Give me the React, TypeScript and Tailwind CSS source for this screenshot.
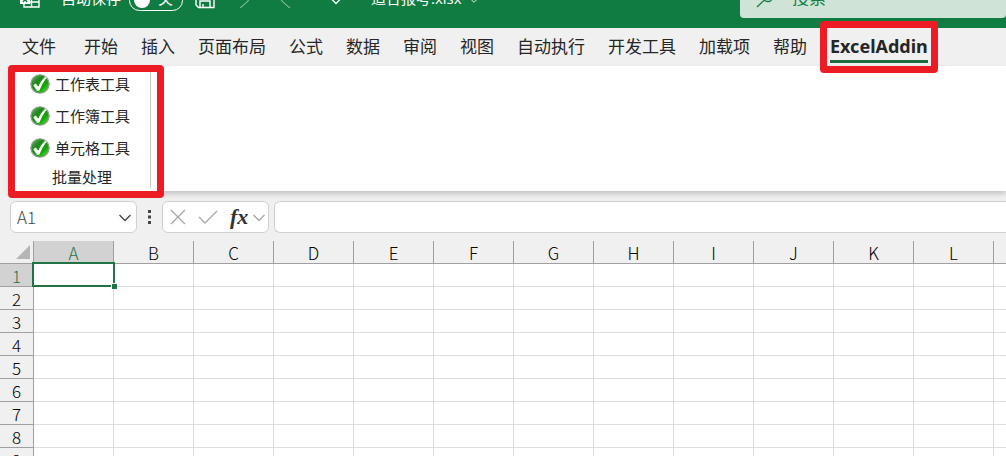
import { useState } from 'react';

const TABS = ['开始', '插入', '页面布局', '公式', '数据', '审阅', '视图', '自动执行', '开发工具', '加载项', '帮助'];
const TOOLS = ['工作表工具', '工作簿工具', '单元格工具'];
const COLUMNS = ['A', 'B', 'C', 'D', 'E', 'F', 'G', 'H', 'I', 'J', 'K', 'L', 'M'];
const ROWS = [1, 2, 3, 4, 5, 6, 7, 8, 9];

function CheckBall() {
  return (
    <svg width="20" height="20" viewBox="0 0 20 20" aria-hidden="true">
      <defs>
        <linearGradient id="ball" x1="0" y1="0" x2="1" y2="1">
          <stop offset="0" stopColor="#7fae7c" />
          <stop offset="0.35" stopColor="#1d8a1c" />
          <stop offset="0.65" stopColor="#12a408" />
          <stop offset="1" stopColor="#62e83c" />
        </linearGradient>
      </defs>
      <circle cx="10" cy="10" r="9.2" fill="url(#ball)" stroke="#93a093" strokeWidth="1.1" />
      <path d="M3.200 11.200l2.600-1.700 2.500 3.300C9.900 9 12.200 5.400 15.200 2.800l1.600.9C13.700 7.300 11.300 11.500 9.500 16.600l-2.300.4z" fill="#fff" />
    </svg>
  );
}

function Chevron({ className, size = 12 }: { className?: string; size?: number }) {
  return (
    <svg className={className} width={size} height={size} viewBox="0 0 12 12" fill="none" stroke="currentColor" strokeWidth="1.3" aria-hidden="true">
      <path d="M0.500 4L6 9.500 11.500 4" />
    </svg>
  );
}

function TitleBar() {
  return (
    <header className="flex h-7 items-end overflow-hidden bg-[#107c41] text-white">
      <div className="flex h-14 w-full shrink-0 items-center">
        <svg className="ml-5 shrink-0" width="20" height="18" viewBox="0 0 20 18" fill="none" stroke="currentColor" strokeWidth="1.4" aria-hidden="true">
          <path d="M4 1h15v15H4zM4 6h15M4 11h15M11.500 1v15" />
          <path d="M0 4h10v9H0z" fill="#fff" stroke="none" />
          <path d="M3 6l4 5M7 6l-4 5" stroke="#107c41" />
        </svg>
        <span className="ml-[21px] pb-1 text-[15px]">自动保存</span>
        <button type="button" role="switch" aria-checked="false" aria-label="自动保存" className="ml-2 flex h-[21px] w-[54px] shrink-0 items-center gap-2 rounded-full border border-white px-1">
          <span className="size-4 rounded-full bg-white" />
          <span className="pb-1 text-[15px]">关</span>
        </button>
        <button type="button" aria-label="保存" className="ml-3">
          <svg width="20" height="18" viewBox="0 0 20 18" fill="none" stroke="currentColor" strokeWidth="1.400">
            <path d="M1 1h15l3 3v12.500H3.500L1 14zM5 16.500V10h10v6.500M8 16v-3M5 1v5h9V1" />
          </svg>
        </button>
        <button type="button" aria-label="撤消" className="ml-5 text-[#7fb998]">
          <svg width="16" height="16" viewBox="0 0 16 16" fill="none" stroke="currentColor" strokeWidth="1.200">
            <path d="M2 1v6h6M2 7C6 1 14 2 14 7c0 2-2 3-9 9" />
          </svg>
        </button>
        <button type="button" aria-label="恢复" className="ml-7 text-[#7fb998]">
          <svg width="16" height="16" viewBox="0 0 16 16" fill="none" stroke="currentColor" strokeWidth="1.200">
            <path d="M14 1v6H8M14 7C10 1 2 2 2 7c0 2 2 3 9 9" />
          </svg>
        </button>
        <Chevron className="ml-[35px] shrink-0" />
        <span className="ml-[29px] pb-1 text-[15px] whitespace-nowrap">适合报考.xlsx</span>
        <Chevron className="ml-2 shrink-0" size={8} />
        <label className="ml-auto flex h-9 w-[266px] items-center gap-4 rounded bg-[#cfe4d7] pl-4 text-[#107c41]">
          <svg className="shrink-0" width="20" height="16" viewBox="0 0 20 16" fill="none" stroke="currentColor" strokeWidth="1.300" aria-hidden="true">
            <circle cx="12" cy="5" r="4.500" />
            <path d="M8.500 8L1 15" />
          </svg>
          <input type="search" placeholder="搜索" aria-label="搜索" className="w-full min-w-0 bg-transparent pb-1 text-[17px] outline-none placeholder:text-[#107c41]" />
        </label>
      </div>
    </header>
  );
}

function RibbonTabs() {
  return (
    <nav className="flex h-[38px] items-center gap-[23px] bg-[#f0f0f0] pl-[22px] text-[17px] whitespace-nowrap text-[#262626]">
      <button type="button" className="mr-[5px]">文件</button>
      {TABS.map(tab => (
        <button type="button" key={tab}>{tab}</button>
      ))}
      <div className="relative">
        <button type="button" aria-current="page" className="block h-8 border-b-3 border-[#1d6b40] font-['Noto_Sans'] text-lg leading-7 font-bold">ExcelAddin</button>
        <div className="pointer-events-none absolute -inset-2.5 z-20 rounded-sm border-[7px] border-[#ed1c24]" />
      </div>
    </nav>
  );
}

function Ribbon() {
  return (
    <section className="bg-[#f0f0f0] pl-2.5">
      <div className="relative z-10 flex h-[125px] bg-white pl-0.5 shadow-[0_3px_5px_#00000030]">
        <div className="relative mt-0.5 flex h-[120px] w-[139px] flex-col border-r border-[#c8c8c8] text-[15px] text-[#262626]">
          {TOOLS.map(tool => (
            <button type="button" key={tool} className="flex h-8 shrink-0 items-center gap-[5px] pl-[18px]">
              <CheckBall />
              {tool}
            </button>
          ))}
          <div className="pl-10 leading-[26px]">批量处理</div>
          <div className="pointer-events-none absolute -top-[3px] -right-3.5 -bottom-2.5 -left-1 z-10 rounded-sm border-[7px] border-[#ed1c24]" />
        </div>
      </div>
    </section>
  );
}

function FormulaBar() {
  const [formula, setFormula] = useState('');

  return (
    <div className="flex h-[50px] items-center bg-[#f0f0f0] pt-0.5 pl-2.5 text-[#444]">
      <div className="flex h-8 w-[127px] items-center rounded-md border border-[#d0d0d0] bg-white pr-[5px]">
        <input defaultValue="A1" aria-label="名称框" className="w-full min-w-0 bg-transparent pl-1.5 font-['Noto_Sans_CJK_SC'] text-[17px] font-light outline-none" />
        <Chevron className="shrink-0" />
      </div>
      <svg className="mx-[11px]" width="3" height="14" viewBox="0 0 3 14" fill="#444" aria-hidden="true">
        <path d="M0 0h3v3H0zM0 5.500h3v3H0zM0 11h3v3H0z" />
      </svg>
      <div className="flex h-8 w-[107px] items-center rounded-md border border-[#d0d0d0] bg-white pl-[7px] text-[#a6a6a6]">
        <button type="button" aria-label="取消">
          <svg width="16" height="16" viewBox="0 0 16 16" fill="none" stroke="currentColor" strokeWidth="1.300"><path d="M1 1l14 14M15 1L1 15" /></svg>
        </button>
        <button type="button" aria-label="输入" className="ml-3">
          <svg width="20" height="16" viewBox="0 0 20 16" fill="none" stroke="currentColor" strokeWidth="1.300"><path d="M1 8l6 6L19 2" /></svg>
        </button>
        <button type="button" className="ml-3 font-['Liberation_Serif'] text-[22px] leading-6 font-bold text-[#333] italic">fx</button>
        <Chevron className="ml-[5px] shrink-0" />
      </div>
      <input value={formula} onChange={e => setFormula(e.target.value)} aria-label="编辑栏" className="ml-[5px] h-8 min-w-0 flex-1 rounded-l-md border border-r-0 border-[#d0d0d0] bg-white px-2 outline-none" />
    </div>
  );
}

function Sheet() {
  return (
    <div className="overflow-hidden">
      <table className="w-[1074px] table-fixed border-separate border-spacing-0 font-['Noto_Sans_CJK_SC'] text-[17px] leading-5 text-black">
        <thead>
          <tr className="h-[23px] bg-[#f0f0f0]">
            <th aria-label="全选" className="w-[34px] border-r border-b border-[#a0a0a0] p-0">
              <svg className="ml-4" width="14" height="14" viewBox="0 0 14 14" fill="#b5b5b5" aria-hidden="true"><path d="M14 0v14H0z" /></svg>
            </th>
            {COLUMNS.map(col => (
              <th key={col} className={`w-20 border-r border-b border-[#a0a0a0] p-0 pt-0.5 font-light ${col === 'A' ? 'bg-[#d2d2d2] text-[#217346]' : ''}`}>{col}</th>
            ))}
          </tr>
        </thead>
        <tbody>
          {ROWS.map(row => (
            <tr key={row} className="h-[23px]">
              <th className={`border-r border-b border-[#a0a0a0] p-0 pt-0.5 font-light ${row === 1 ? 'bg-[#d2d2d2] text-[#217346]' : 'bg-[#f0f0f0]'}`}>{row}</th>
              {COLUMNS.map(col => (
                <td key={col} className="relative border-r border-b border-[#dcdcdc] bg-white p-0">
                  {row === 1 && col === 'A' && (
                    <div className="absolute -top-0.5 -right-0.5 -bottom-px -left-0.5 z-10 border-2 border-[#217346]">
                      <span className="absolute -right-1 -bottom-1 size-[6px] border-t border-l border-white bg-[#217346]" />
                    </div>
                  )}
                </td>
              ))}
            </tr>
          ))}
        </tbody>
      </table>
    </div>
  );
}

export default function App() {
  return (
    <div className="h-screen overflow-hidden bg-white font-['Open_Sans','Noto_Sans_CJK_SC',sans-serif]">
      <TitleBar />
      <RibbonTabs />
      <Ribbon />
      <FormulaBar />
      <Sheet />
    </div>
  );
}
